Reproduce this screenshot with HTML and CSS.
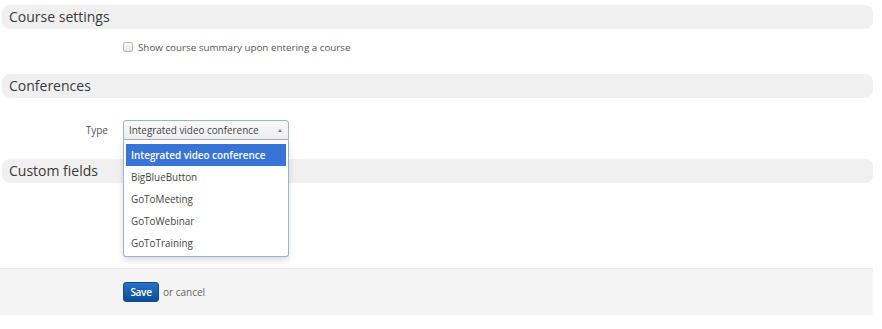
FILE: index.html
```html
<!DOCTYPE html>
<html lang="en">
<head>
  <meta charset="UTF-8">
  <title>Course settings</title>
  <link rel="stylesheet" href="styles.css">
</head>
<body>
  <form class="settings">
    <!-- Course settings -->
    <fieldset class="group group-course">
      <h2 class="legend">Course settings</h2>
      <div class="row">
        <div class="row-label"></div>
        <label class="check">
          <input type="checkbox" name="show_summary">
          <span>Show course summary upon entering a course</span>
        </label>
      </div>
    </fieldset>

    <!-- Conferences -->
    <fieldset class="group group-conf">
      <h2 class="legend">Conferences</h2>
      <div class="row">
        <div class="row-label">Type</div>
        <div class="select">
          <div class="select-value">
            <span>Integrated video conference</span>
            <b class="arrow"></b>
          </div>
          <ul class="select-list">
            <li class="active">Integrated video conference</li>
            <li>BigBlueButton</li>
            <li>GoToMeeting</li>
            <li>GoToWebinar</li>
            <li>GoToTraining</li>
          </ul>
        </div>
      </div>
    </fieldset>

    <!-- Custom fields -->
    <fieldset class="group group-custom">
      <h2 class="legend">Custom fields</h2>
    </fieldset>

    <div class="actions">
      <button type="submit" class="btn-save">Save</button>
      <span class="cancel">or cancel</span>
    </div>
  </form>
</body>
</html>
```

FILE: styles.css
```css
body {
  margin: 0;
  background-color: #ffffff;
  font-family: "Open Sans", "Liberation Sans", sans-serif;
  color: #555555;
}
.settings {
  padding-top: 5px;
}
.group {
  border: none;
  margin: 0 9px 0 2px;
  padding: 0;
}
.legend {
  margin: 0;
  height: 24px;
  line-height: 24px;
  padding-left: 7px;
  background-color: #f0f0f0;
  border-radius: 8px;
  font-size: 14px;
  font-weight: normal;
  color: #3a3a3a;
}
.group-course {
  padding: 10px 0 19px;
}
.group-course .legend {
  margin-top: -10px;
  margin-bottom: 10px;
}
.group-conf .legend {
  margin-bottom: 22px;
}
.group-conf {
  padding-bottom: 19px;
}
.group-custom {
  padding-bottom: 85px;
}
.row {
  display: flex;
  align-items: center;
  min-height: 16px;
}
.row-label {
  width: 106px;
  margin-right: 15px;
  text-align: right;
  font-size: 10px;
  color: #555555;
}
.check {
  display: flex;
  align-items: center;
  gap: 5px;
  font-size: 9.8px;
  color: #555555;
}
.check input {
  appearance: none;
  -webkit-appearance: none;
  margin: 0;
  width: 10px;
  height: 10px;
  border: 1px solid #b8b8b8;
  border-radius: 2px;
  background: linear-gradient(#fbfbfb, #e6e6e6);
}

/* select with open list */
.select {
  position: relative;
  width: 166px;
}
.select-value {
  display: flex;
  align-items: center;
  justify-content: space-between;
  box-sizing: border-box;
  height: 20px;
  padding: 0 6px 0 5px;
  border: 1px solid #9fb1cc;
  border-radius: 3px 3px 0 0;
  background: linear-gradient(#f9f9f9, #eeeeee);
  font-size: 9.9px;
  color: #444444;
}
.arrow {
  width: 0;
  height: 0;
  border-left: 2px solid transparent;
  border-right: 2px solid transparent;
  border-bottom: 3px solid #777777;
}
.select-list {
  position: absolute;
  z-index: 2;
  top: 20px;
  left: 0;
  right: 0;
  margin: 0;
  padding: 4px 2px 2px;
  list-style: none;
  background-color: #ffffff;
  border: 1px solid #9fb1cc;
  border-top: none;
  border-radius: 0 0 3px 3px;
  box-shadow: 0 4px 6px rgba(0, 0, 0, 0.12);
}
.select-list li {
  height: 22px;
  line-height: 22px;
  padding-left: 5px;
  font-size: 9.9px;
  color: #444444;
}
.select-list li.active {
  background-color: #3874d6;
  color: #ffffff;
  font-weight: 600;
}

/* form footer */
.actions {
  display: flex;
  align-items: center;
  gap: 4px;
  margin-right: 9px;
  padding: 13px 0 13px 123px;
  background-color: #f4f4f4;
  border-top: 1px solid #ebebeb;
}
.btn-save {
  height: 20px;
  width: 36px;
  padding: 0;
  border: 1px solid #0b4a91;
  border-radius: 3px;
  background: linear-gradient(#2a72c5, #0a4d9b);
  color: white;
  font-family: inherit;
  font-size: 10px;
  font-weight: 600;
  letter-spacing: -0.3px;
  cursor: pointer;
}
.cancel {
  font-size: 10px;
  color: #666666;
}
```
